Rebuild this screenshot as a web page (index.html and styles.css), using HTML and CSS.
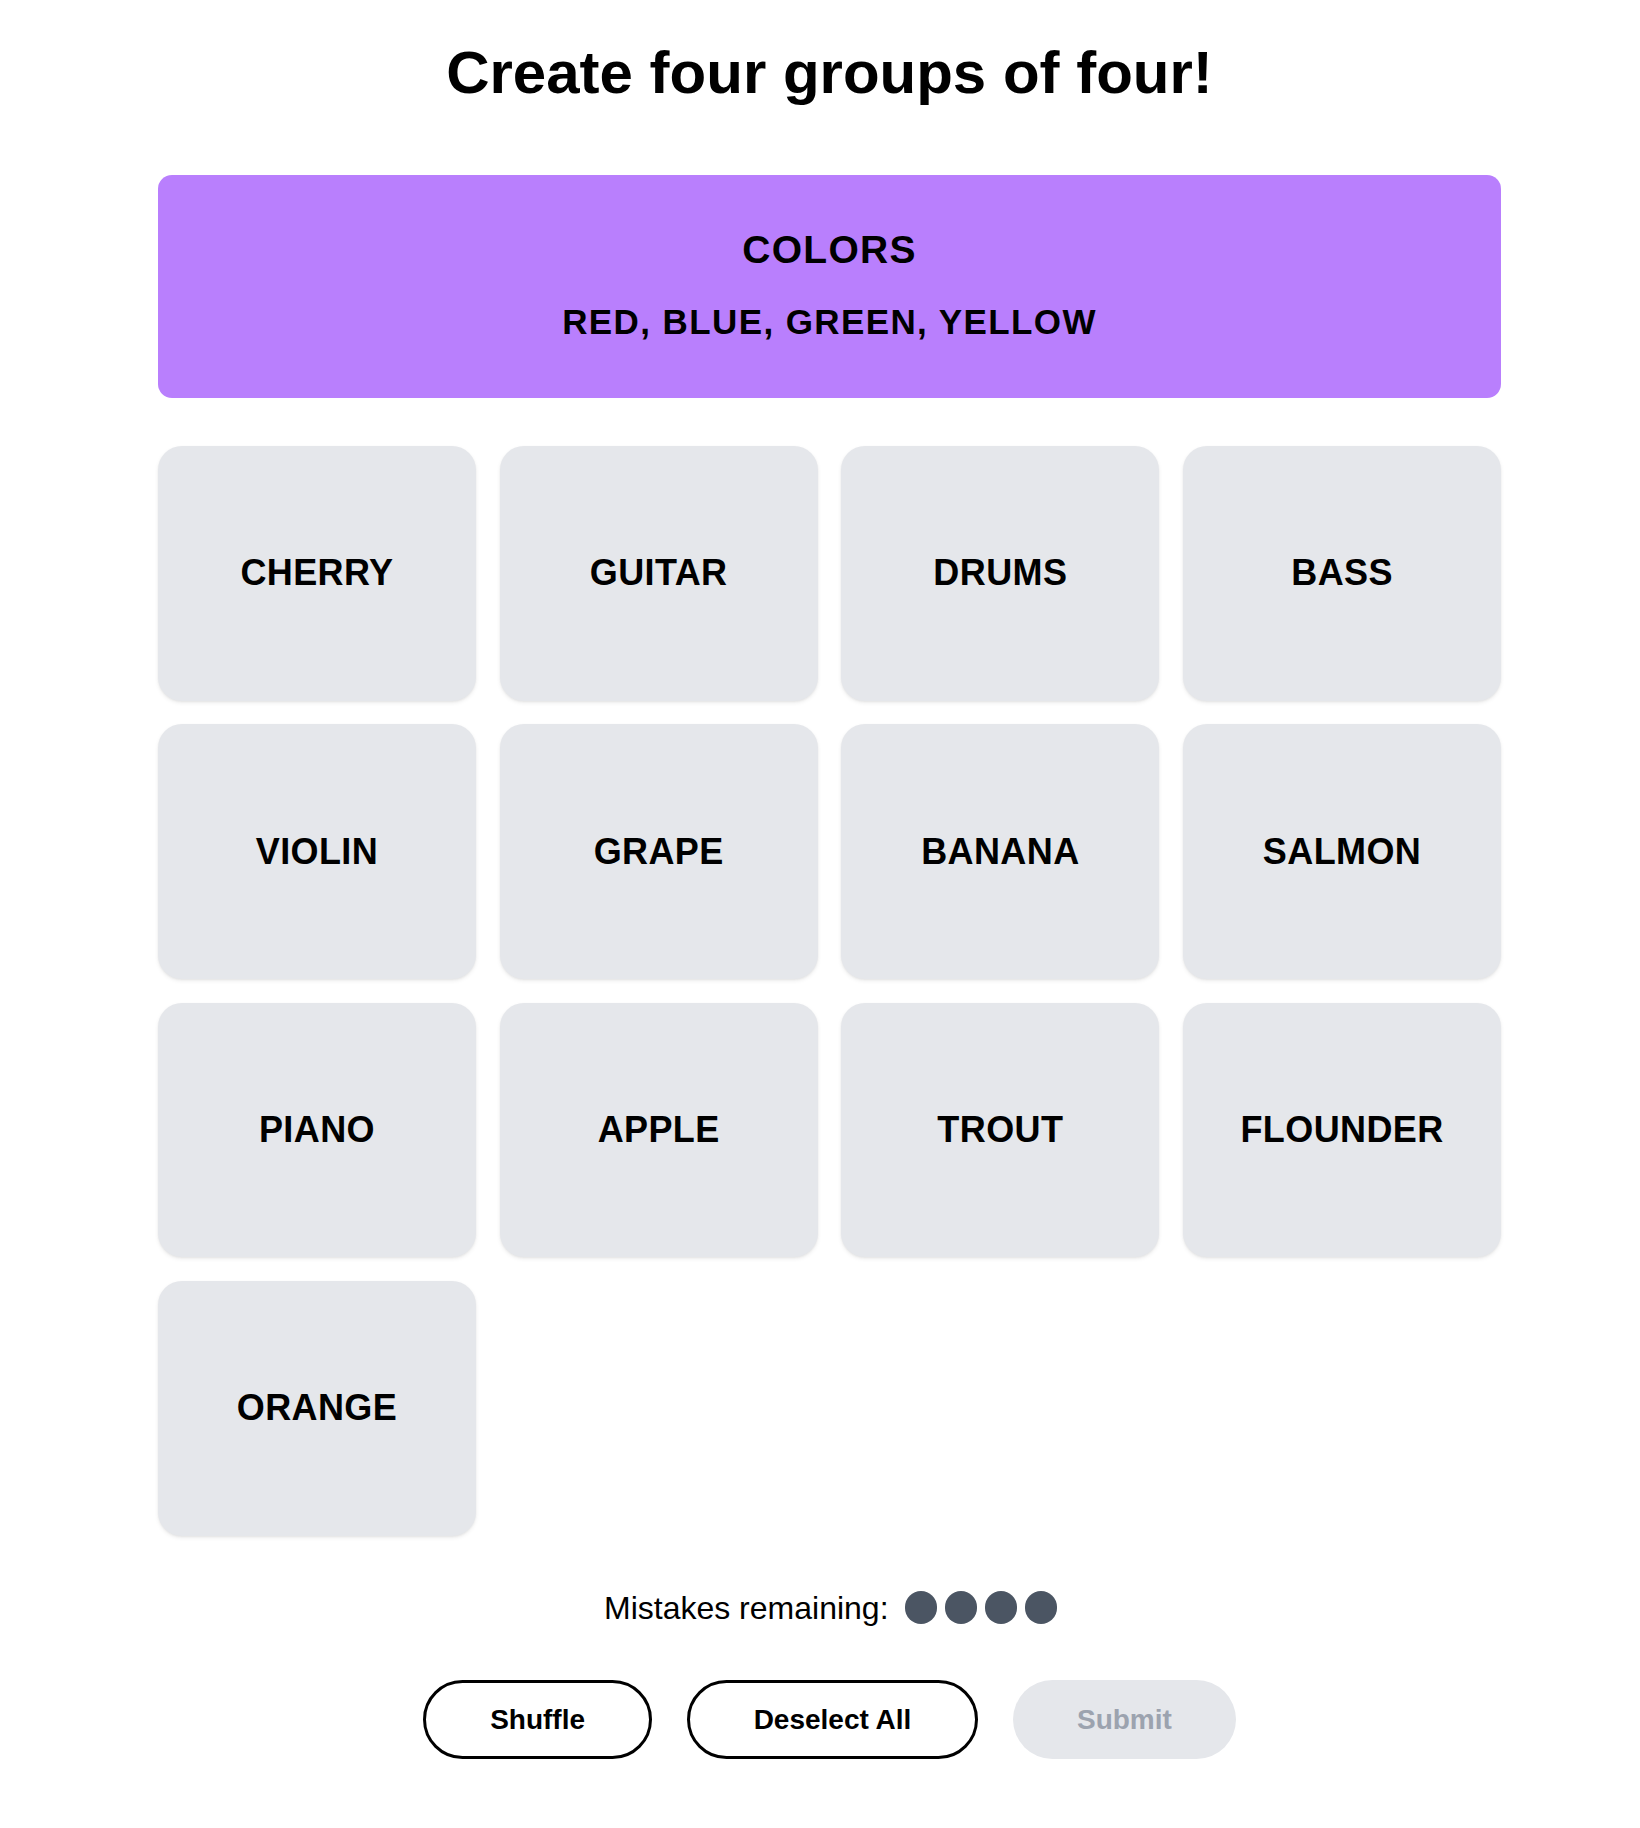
FILE: index.html
```html
<!DOCTYPE html>
<html lang="en">
<head>
<meta charset="utf-8">
<title>Connections</title>
<link rel="stylesheet" href="styles.css">
</head>
<body>
<div class="page">
  <main class="game">
    <h1 class="title">Create four groups of four!</h1>
    <section class="solved">
      <div class="solved-name">COLORS</div>
      <div class="solved-items">RED, BLUE, GREEN, YELLOW</div>
    </section>
    <div class="grid">
      <button class="tile">CHERRY</button>
      <button class="tile">GUITAR</button>
      <button class="tile">DRUMS</button>
      <button class="tile">BASS</button>
      <button class="tile">VIOLIN</button>
      <button class="tile">GRAPE</button>
      <button class="tile">BANANA</button>
      <button class="tile">SALMON</button>
      <button class="tile">PIANO</button>
      <button class="tile">APPLE</button>
      <button class="tile">TROUT</button>
      <button class="tile">FLOUNDER</button>
      <button class="tile">ORANGE</button>
    </div>
    <div class="mistakes">
      <span class="mistakes-label">Mistakes remaining:</span>
      <span class="dots">
        <span class="dot"></span><span class="dot"></span><span class="dot"></span><span class="dot"></span>
      </span>
    </div>
    <div class="actions">
      <button class="btn">Shuffle</button>
      <button class="btn">Deselect All</button>
      <button class="btn btn-disabled" disabled>Submit</button>
    </div>
  </main>
</div>
</body>
</html>
```
FILE: styles.css
```css
* { box-sizing: border-box; }
html, body { margin: 0; padding: 0; background: #ffffff; }
body {
  font-family: "Liberation Sans", Arial, Helvetica, sans-serif;
  color: #000;
}
.page {
  padding-left: 19px;
}
.game {
  width: 1343px;
  margin: 0 auto;
  display: flex;
  flex-direction: column;
  align-items: stretch;
}
.title {
  margin: 43.2px 0 0;
  font-size: 60px;
  line-height: 1;
  font-weight: 700;
  text-align: center;
  height: 60px;
}
.solved {
  margin-top: 71.8px;
  background: #b97ffd;
  border-radius: 14px;
  padding: 55.5px 20px 59.1px;
  text-align: center;
}
.solved-name {
  font-size: 39px;
  line-height: 1;
  font-weight: 700;
  letter-spacing: 1.3px;
}
.solved-items {
  margin-top: 34.4px;
  font-size: 35px;
  line-height: 1;
  font-weight: 700;
  letter-spacing: 1.4px;
}
.grid {
  margin-top: 48px;
  display: grid;
  grid-template-columns: repeat(4, 1fr);
  grid-auto-rows: 254.6px;
  gap: 23.8px;
}
.tile {
  border: none;
  margin: 0;
  padding: 0;
  background: #e5e7eb;
  border-radius: 24px;
  box-shadow: 0 2px 4px rgba(0, 0, 0, 0.07), 0 1px 2px rgba(0, 0, 0, 0.05);
  font-family: "Liberation Sans", Arial, Helvetica, sans-serif;
  font-size: 36px;
  font-weight: 700;
  letter-spacing: 0.4px;
  color: #000;
  display: flex;
  align-items: center;
  justify-content: center;
}
.mistakes {
  margin-top: 54px;
  padding-left: 2px;
  display: flex;
  justify-content: center;
  align-items: center;
  gap: 16px;
  height: 36px;
}
.mistakes-label {
  font-size: 32px;
  line-height: 36px;
  color: #000;
}
.dots {
  display: flex;
  gap: 7.5px;
}
.dot {
  width: 32.5px;
  height: 32.5px;
  border-radius: 50%;
  background: #4b5563;
}
.actions {
  margin-top: 54.7px;
  display: flex;
  justify-content: center;
  gap: 34.6px;
}
.btn {
  height: 78.6px;
  padding: 0 64px;
  border: 3.3px solid #000;
  border-radius: 999px;
  background: #fff;
  font-family: "Liberation Sans", Arial, Helvetica, sans-serif;
  font-size: 28px;
  font-weight: 700;
  color: #000;
}
.btn-disabled {
  border: none;
  padding: 0 64px;
  background: #e5e7eb;
  color: #9ca3af;
}
```
